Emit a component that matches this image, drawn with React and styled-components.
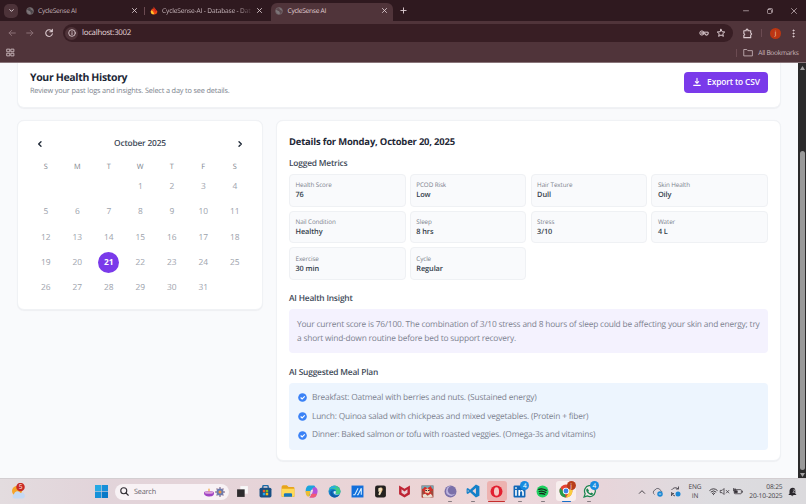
import React from "react";
import styled, { createGlobalStyle } from "styled-components";

const Global = createGlobalStyle`
  * { box-sizing: border-box; }
  body { margin: 0; overflow: hidden; font-family: "Open Sans", "Noto Sans", sans-serif; text-rendering: geometricPrecision; }
  svg { display: block; flex: none; }
`;

const Screen = styled.div`
  width: 806px; height: 504px; overflow: hidden;
  display: flex; flex-direction: column; background: #f9fafc;
`;

/* text */
const Text = styled.span`
  display: block; white-space: nowrap; flex: none; margin: 0;
  font-size: ${(p) => p.$size}px;
  font-weight: ${(p) => p.$weight || 400};
  color: ${(p) => p.$color};
  letter-spacing: ${(p) => p.$track || 0}px;
  line-height: ${(p) => p.$line || 10}px;
`;
const Heading = styled(Text)`
  font-size: 8.4px; font-weight: 600; letter-spacing: -0.2px; line-height: 12px; color: #414a58;
`;
const DetailsTitle = styled(Text)`margin-bottom: 10.2px;`;
const IconTone = styled.div`color: ${(p) => p.$color};`;

/* browser chrome */
const TabStrip = styled.div`
  height: 21px; flex: none; background: #2f191f; color: #dccbd0;
  display: flex; align-items: center;
`;
const TabSearch = styled.div`
  width: 14px; height: 14px; margin-left: 4px; border-radius: 5px; background: #4d3339;
  display: flex; align-items: center; justify-content: center;
`;
const Tab = styled.div`
  width: ${(p) => p.$w}px; height: 18px; flex: none; align-self: flex-end; margin-left: ${(p) => p.$ml}px;
  padding: 0 5.5px 3px 4px; border-radius: 6px 6px 0 0;
  display: flex; align-items: center; gap: 4.5px;
  background: ${(p) => (p.$active ? "#50343a" : "transparent")};
`;
const TabTitle = styled(Text)`
  flex: 1; height: 10px;
  ${(p) => p.$fade && "mask-image: linear-gradient(90deg, #000 76px, rgba(0,0,0,.25) 87px);"}
`;
const Divider = styled.div`
  width: 1px; height: 8px; background: #6b4b52; margin-left: ${(p) => p.$ml || 0}px;
`;
const NewTab = styled.div`margin-left: 7px;`;
const WindowButtons = styled.div`
  margin-left: auto; padding-right: 9px; display: flex; align-items: center; gap: 18px;
`;
const Toolbar = styled.div`
  height: 24px; flex: none; background: #50343a; display: flex; align-items: center;
  padding: 0 8px 0 6.5px; color: #dccbd0;
`;
const NavButtons = styled.div`display: flex; gap: 8.8px; width: 56.5px;`;
const Omnibox = styled.div`
  width: 670px; height: 18px; border-radius: 9px; background: #381e24;
  display: flex; align-items: center; padding: 0 7px 0 2px; gap: 4px;
`;
const InfoChip = styled.div`
  width: 13px; height: 13px; border-radius: 50%; background: #50343a;
  display: flex; align-items: center; justify-content: center;
`;
const OmniActions = styled.div`margin-left: auto; display: flex; gap: 7px; align-items: center;`;
const ToolbarEnd = styled.div`
  margin-left: 9px; display: flex; align-items: center; flex: 1; justify-content: space-between;
`;
const Avatar = styled.div`
  width: 11px; height: 11px; border-radius: 50%; background: #bc3612; color: #fbd9cd;
  font-size: 6px; display: flex; align-items: center; justify-content: center;
`;
const Bookmarks = styled.div`
  height: 18.4px; flex: none; background: #50343a; display: flex; align-items: center;
  padding: 0 7.5px 2px 6px; color: #c9b6bb; border-bottom: 1px solid #89757a;
`;
const BookmarksEnd = styled.div`margin-left: auto; display: flex; align-items: center; gap: 4px;`;

/* page */
const Body = styled.div`flex: 1; min-height: 0; display: flex;`;
const Page = styled.div`
  width: 798px; flex: none; background: #f9fafc; padding: 0 17px; overflow: hidden;
`;
const Card = styled.section`
  background: #fff; border: 1px solid #f0f2f5; border-radius: 7px;
  box-shadow: 0 0.5px 1px rgba(30, 41, 59, 0.05);
`;
const HeaderCard = styled(Card)`
  height: 45px; border-top: 0; border-radius: 0 0 7px 7px; padding: 0 12px;
  display: flex; justify-content: space-between;
`;
const HeaderCopy = styled.div`padding-top: 8.8px;`;
const ExportButton = styled.button`
  width: 84px; height: 21px; margin-top: 8.6px; border: 0; border-radius: 4px; background: #7a3aea;
  display: flex; align-items: center; justify-content: center; gap: 5px; padding: 0; font-family: inherit;
`;
const Columns = styled.div`display: flex; gap: 13px; align-items: flex-start; margin-top: 11.9px;`;
const Calendar = styled(Card)`width: 246px; height: 190px; padding: 0 12px;`;
const MonthBar = styled.div`
  height: 21px; margin-top: 12.6px; padding: 0 5.5px; display: flex; align-items: center; justify-content: space-between;
`;
const Days = styled.div`
  display: grid; grid-template-columns: repeat(7, 31.5px);
  grid-template-rows: 13px repeat(5, 25.12px);
  place-items: center; margin-top: 6.4px;
`;
const Day = styled(Text)`
  width: 21px; height: 21px; line-height: 21px; text-align: center; border-radius: 50%;
  grid-column-start: ${(p) => p.$col || "auto"};
  background: ${(p) => (p.$selected ? "#7a3aea" : "transparent")};
`;

const Details = styled(Card)`width: 505px; height: 341px; padding: 14.6px 12px 0;`;
const Metrics = styled.div`
  display: grid; grid-template-columns: repeat(4, 1fr); grid-auto-rows: 32.8px;
  gap: 3.8px 4.2px; margin: 4px 0 13.3px;
`;
const Metric = styled.div`
  background: #f9fafc; border: 1px solid #eff1f4; border-radius: 4px; padding: 5.3px 5.5px 0;
`;
const Insight = styled.div`
  height: 44px; border-radius: 4px; background: #f4f2fe; padding: 8.7px 8px 0; margin: 4px 0 13.6px;
`;
const Meals = styled.div`
  height: 67px; border-radius: 4px; background: #edf5fe; padding: 5.4px 9px; margin-top: 4px;
`;
const Meal = styled.div`height: 18.8px; display: flex; align-items: center; gap: 5px;`;

const Scrollbar = styled.div`
  width: 8px; background: #2b2a2b; display: flex; flex-direction: column; align-items: center; padding: 3px 0 1.5px;
`;
const Thumb = styled.div`width: 5px; height: 319px; margin-top: auto; margin-bottom: 3px; border-radius: 3px; background: #999;`;

/* taskbar */
const Taskbar = styled.div`
  height: 25.6px; flex: none; border-top: 1px solid #d3ced1; display: flex; align-items: center;
  background: linear-gradient(90deg, #e3dcdf 0, #e2d4da 12%, #e7d4d8 35%, #ecd4d5 53%, #edd8dc 65%, #e7d5da 75%, #dddce0 88%, #dbdadd 100%);
`;
const Weather = styled.div`margin-left: 10px; width: 85px;`;
const Search = styled.div`
  width: 114px; height: 16px; margin-left: 7px; border-radius: 8px; background: #f8f2f5;
  display: flex; align-items: center; padding: 0 3px 0 5px; gap: 5px;
`;
const SearchArt = styled.div`margin-left: auto;`;
const Apps = styled.div`
  display: grid; grid-template-columns: repeat(16, 23.15px); margin-left: 1.5px; height: 100%;
`;
const AppSlot = styled.div`
  height: 24px; display: flex; flex-direction: column; align-items: center; justify-content: center; position: relative;
`;
const Plate = styled.div`
  width: 20px; height: 20px; border-radius: 3px; display: flex; align-items: center; justify-content: center;
  background: ${(p) => p.$bg || "transparent"};
`;
const Running = styled.i`
  position: absolute; bottom: 1px; height: 1.6px; border-radius: 1px;
  width: ${(p) => p.$w}px; background: ${(p) => p.$c};
`;
const Badge = styled.i`
  position: absolute; right: 2px; top: 2px; width: 9px; height: 9px; border-radius: 50%;
  background: ${(p) => p.$c}; color: #fff; font: normal 6.5px/9px "Open Sans", sans-serif; text-align: center;
`;
const Tray = styled.div`margin-left: auto; padding-right: 9.5px; display: flex; align-items: center; color: #353238;`;
const Stack = styled.div`
  width: ${(p) => p.$w}px; display: flex; flex-direction: column; align-items: ${(p) => p.$align}; margin: 0 4px;
`;

const S = ({ w = 10, h = w, vb = "0 0 24 24", sw = 2, children, fill = "none" }) => (
  <svg width={w} height={h} viewBox={vb} fill={fill} stroke="currentColor" strokeWidth={sw} strokeLinecap="round" strokeLinejoin="round">
    {children}
  </svg>
);
const Raw = ({ w = 13, h = w, vb = "0 0 24 24", children }) => (
  <svg width={w} height={h} viewBox={vb}>{children}</svg>
);
const Cross = ({ w = 8, sw = 3 }) => <S w={w} sw={sw}><path d="M5 5l14 14M19 5L5 19" /></S>;
const Globe = ({ light }) => (
  <Raw w={8}>
    <circle cx="12" cy="12" r="10.5" fill={light ? "#5b494e" : "#4c464a"} stroke="#776b6f" strokeWidth="2" />
    <path d="M3 9c4-1 5 3 8 3s1 4 4 5-2 4-4 5C5 21 2 15 3 9zM12 2c3 3 1 5 4 6s3 3 6 3c-1-5-5-9-10-9z" fill="#7d7679" />
  </Raw>
);
const Flame = () => (
  <Raw w={8} h={9}>
    <path d="M11 0c1 5 6 7 8 11l3 3c1 6-4 10-10 10S1 19 3 13c1-4 3-4 3-8 2 1 3 3 3 4 2-3 2-6 2-9z" fill="#ed4b16" />
    <path d="M3 12c4-1 7 4 10 11C6 25 0 19 3 12z" fill="#ffc52b" /><path d="M11 0c1 5 6 7 8 11l-4 6z" fill="#c91c22" />
  </Raw>
);

const appIcons = [
  { icon: <Raw><path d="M8 2h14v14H8z" fill="#f8f7f8" /><path d="M2 8h14v14H2z" fill="#2d2b2d" /></Raw> },
  { icon: <Raw><path d="M7 6V3q0-2 2-2h6q2 0 2 2v3" fill="none" stroke="#1c6ba6" strokeWidth="2.5" /><rect x="1" y="5" width="22" height="18" rx="3" fill="#174f83" /><path d="M7 9h4.5v4.5H7z" fill="#f05b2d" /><path d="M12.5 9H17v4.5h-4.5z" fill="#83bd23" /><path d="M7 14.5h4.5V19H7z" fill="#21a6e8" /><path d="M12.5 14.5H17V19h-4.5z" fill="#fab916" /></Raw> },
  { icon: <Raw w={14}><path d="M1 5q0-3 3-3h6l3 3h8q2 0 2 2v15H1z" fill="#e7a51b" /><path d="M1 8h22v11q0 3-3 3H4q-3 0-3-3z" fill="#ffda58" /><path d="M5 18q0-2 2-2h10q2 0 2 2v4H5z" fill="#1776bd" /></Raw> },
  { icon: <Raw><path d="M7 1h9c3 0 3 4 4 6h-7L9 20H5c-2 0-2-3-3-6C0 9 3 1 7 1z" fill="#1ba4dc" /><path d="M1 11h9l-2 10c-5 2-7-5-7-10z" fill="#edbd35" /><path d="M16 4h3c5 2 5 8 3 13-2 5-4 6-7 6H8c3-2 4-6 5-10 1-5 1-9 3-9z" fill="#b552db" /><path d="M8 23c2-1 3-4 4-7h10c-1 4-3 7-7 7z" fill="#f15c73" /><path d="M11 9h4l-2 7H9z" fill="#f0dde2" /></Raw> },
  { icon: <Raw><circle cx="12" cy="12" r="11" fill="#1684cc" /><path d="M1.5 11C3-2 21-2 23 11c1 7-8 8-9 4 3-5-1-8-5-8s-6 1-7.5 4z" fill="#40cd82" /><path d="M1.5 11C4-1 15 0 17 7 12 4 4 6 1.5 11z" fill="#26aee2" /><path d="M8 13c0 6 6 8 13 5-4 7-16 7-17-3 0-5 8-7 10-3-3-2-6-1-6 1z" fill="#105aa7" /><path d="M13.5 11c3 2-1 4 1 5.5s6 1 8-1c-3 4-11 3-12-1-1-2 1-4 3-3.5z" fill="#e7eef0" /></Raw> },
  { icon: <Raw><path d="M1 1h22v22H1z" fill="#126fdb" /><path d="M4 18h3l6-12M11 18h2l6-12v12" stroke="#d8efff" strokeWidth="2" fill="none" /></Raw> },
  { icon: <Raw><rect x="2" y="1" width="20" height="22" rx="4" fill="#24211f" /><path d="M8 6c6-3 9-1 7 5l-4 8-3-1 2-7-2 2z" fill="#efdfbe" /><path d="M14 5l2 3-3 5" stroke="#d38d3e" fill="none" /></Raw> },
  { icon: <Raw><path d="M2 1l10 6 10-6v16l-10 6-10-6z" fill="#be2434" /><path d="M6.5 8l5.5 4 5.5-4v6.5L12 18l-5.5-3.5z" fill="#e8cdd2" /></Raw> },
  { icon: <Raw><path d="M1 1h22v22H1z" fill="#9b4b3e" /><path d="M1 1h22v6H1z" fill="#72a7b6" /><path d="M2 9l5-6 5 3 6-4 4 8-5 1 5 11h-7l-3-7-7 8H2l5-9z" fill="#d62f29" /><path d="M7 9l5-3 5 4-3 5-6-1z" fill="#f1ccad" /><path d="M3 18l5-2 4 4 6-4 4 5-6 2H4z" fill="#e9e1d4" /><path d="M8 10h3m2 0h3" stroke="#312129" strokeWidth="2" /></Raw> },
  { icon: <Raw><circle cx="12" cy="12" r="11" fill="#7b70a9" /><path d="M13 2a9 9 0 1 0 8 13A8 8 0 1 1 13 2z" fill="#beb5df" /><circle cx="14" cy="10" r="4" fill="#7a70aa" /></Raw>, run: true },
  { icon: <Raw w={14}><path d="M17 1l6 3v16l-6 3L7 14l-4 3-2-1V8l2-1 4 3z" fill="#1380c9" /><path d="M17 7l-6 5 6 5zM3 10v4l2-2z" fill="#e9d3d7" /></Raw>, run: true },
  { icon: <Raw><circle cx="12" cy="12" r="11" fill="#e22030" /><ellipse cx="12" cy="12" rx="4.7" ry="8" fill="#f5c9c4" /></Raw>, plate: "#edb2b0", run: true, wide: 17, rc: "#c62e2d" },
  { icon: <Raw><rect x="1" y="1" width="22" height="22" rx="2" fill="#1167b7" /><path d="M4 9h3v11H4zM4 4h3v3H4zM10 9h3v2c2-3 7-3 7 3v6h-3v-6c0-3-4-3-4 0v6h-3z" fill="#fff" /></Raw>, run: true, badge: "4", bc: "#168be0" },
  { icon: <Raw><circle cx="12" cy="12" r="11" fill="#1fd060" /><path d="M5 8q7-2 14 2M6 12q6-2 12 2M7 16q5-1 9 1" fill="none" stroke="#17251b" strokeWidth="2.4" strokeLinecap="round" /></Raw>, run: true },
  { icon: <Raw w={14}><circle cx="12" cy="12" r="11" fill="#e34334" /><path d="M2 7l7 7 3 9A11 11 0 0 1 2 7z" fill="#269b4c" /><path d="M12 7h10a11 11 0 0 1-10 16l5-9z" fill="#f9cc3d" /><circle cx="12" cy="12" r="5.5" fill="#fff" /><circle cx="12" cy="12" r="4.2" fill="#3e83e8" /></Raw>, plate: "#f8eeee", run: true, wide: 9, rc: "#176ec7", badge: "j", bc: "#b83c1c" },
  { icon: <Raw><path d="M2 22l2-6a10 10 0 1 1 4 4z" fill="#f0e5e6" stroke="#1c8650" strokeWidth="2.3" /><path d="M8 6l3 4-1 2q1 3 4 3l2-1 3 2q-2 4-6 2-5-2-7-7-1-3 2-5z" fill="#1c8650" /></Raw>, run: true, badge: "4", bc: "#168be0" },
];

const metrics = [
  ["Health Score", "76"], ["PCOD Risk", "Low"], ["Hair Texture", "Dull"], ["Skin Health", "Oily"],
  ["Nail Condition", "Healthy"], ["Sleep", "8 hrs"], ["Stress", "3/10"], ["Water", "4 L"],
  ["Exercise", "30 min"], ["Cycle", "Regular"],
];
const meals = [
  "Breakfast: Oatmeal with berries and nuts. (Sustained energy)",
  "Lunch: Quinoa salad with chickpeas and mixed vegetables. (Protein + fiber)",
  "Dinner: Baked salmon or tofu with roasted veggies. (Omega-3s and vitamins)",
];

export default function App() {
  return (
    <Screen>
      <Global />
      <TabStrip>
        <TabSearch><S w={7} sw={3.4}><path d="M6 9l6 6 6-6" /></S></TabSearch>
        <Tab $w={121.5} $ml={3.5}><Globe /><TabTitle $size={6.6} $track={-0.26} $color="#c9b8bd">CycleSense AI</TabTitle><Cross w={7} /></Tab>
        <Divider $ml={1} />
        <Tab $w={122.5} $ml={0.5}><Flame /><TabTitle $fade $size={6.6} $track={-0.16} $color="#c9b8bd">CycleSense-AI - Database - Dat</TabTitle><Cross w={7} /></Tab>
        <Tab $w={122} $ml={3} $active><Globe light /><TabTitle $size={6.6} $track={-0.26} $color="#e5d7db">CycleSense AI</TabTitle><Cross w={7} /></Tab>
        <NewTab><S w={7} sw={3.2}><path d="M12 3v18M3 12h18" /></S></NewTab>
        <WindowButtons>
          <S w={6} sw={2.5}><path d="M2 11h20" /></S>
          <S w={6} sw={2.5}><rect x="2" y="6" width="16" height="16" rx="3" /><path d="M7 2h11q4 0 4 4v11" /></S>
          <S w={6} sw={2.7}><path d="M2 2l20 20M22 2L2 22" /></S>
        </WindowButtons>
      </TabStrip>
      <Toolbar>
        <NavButtons>
          <IconTone $color="#8b7076"><S sw={2.4}><path d="M20 12H5M11 6l-6 6 6 6" /></S></IconTone>
          <IconTone $color="#8b7076"><S sw={2.4}><path d="M4 12h15M13 6l6 6-6 6" /></S></IconTone>
          <S sw={2.6}><path d="M19 8a8 8 0 1 0 1 6M20 3v6h-6" /></S>
        </NavButtons>
        <Omnibox>
          <InfoChip><S w={8} sw={2.6}><circle cx="12" cy="12" r="10" /><path d="M12 11v6M12 7v.3" /></S></InfoChip>
          <Text $size={7.9} $track={-0.3} $color="#e5d7da">localhost:3002</Text>
          <OmniActions>
            <S w={10} sw={2.4}><circle cx="7" cy="12" r="5" /><circle cx="7" cy="12" r="1" /><path d="M12 10h10v5h-2v2h-4v-3h-4" /></S>
            <S w={10} sw={2.4}><path d="M12 3l2.7 6 6.3.6-4.8 4.2L17.7 20 12 16.7 6.3 20l1.500-6.200L3 9.600 9.300 9z" /></S>
          </OmniActions>
        </Omnibox>
        <ToolbarEnd>
          <S w={11} sw={2.4}><path d="M4 6h5V4q2-3 4 0v2h6v5q4 2 0 4v6H4v-5q4-2 0-4z" /></S>
          <Divider />
          <Avatar>j</Avatar>
          <S w={9} fill="currentColor" sw={1.4}><circle cx="12" cy="4" r="1.8" /><circle cx="12" cy="12" r="1.8" /><circle cx="12" cy="20" r="1.8" /></S>
        </ToolbarEnd>
      </Toolbar>
      <Bookmarks>
        <S w={9} sw={2.5}><path d="M3 3h7v7H3zM14 3h7v7h-7zM3 14h7v7H3zM14 14h7v7h-7z" /></S>
        <BookmarksEnd>
          <Divider />
          <S w={13} h={9} vb="-6 0 34 24" sw={2.2}><path d="M1 20V4h8l3 3h12v13z" /></S>
          <Text $size={6.6} $track={-0.29} $color="#cbbabf">All Bookmarks</Text>
        </BookmarksEnd>
      </Bookmarks>

      <Body>
        <Page>
          <HeaderCard>
            <HeaderCopy>
              <Text as="h1" $size={10.5} $weight={700} $track={-0.34} $line={12.4} $color="#1d2736">Your Health History</Text>
              <Text $size={7.35} $track={-0.165} $line={12} $color="#7d838e">Review your past logs and insights. Select a day to see details.</Text>
            </HeaderCopy>
            <ExportButton>
              <IconTone $color="#fff"><S w={10} sw={2.6}><path d="M12 3v11M8 11l4 4 4-4M4 20h16" /></S></IconTone>
              <Text $size={8.4} $weight={600} $track={-0.13} $color="#fff">Export to CSV</Text>
            </ExportButton>
          </HeaderCard>
          <Columns>
            <Calendar>
              <MonthBar>
                <IconTone $color="#1f2937"><S w={8} sw={4}><path d="M15 5l-7 7 7 7" /></S></IconTone>
                <Heading as="h2">October 2025</Heading>
                <IconTone $color="#1f2937"><S w={8} sw={4}><path d="M9 5l7 7-7 7" /></S></IconTone>
              </MonthBar>
              <Days>
                {"SMTWTFS".split("").map((d, i) => <Day key={i} $size={7.35} $color="#7d838e">{d}</Day>)}
                {Array.from({ length: 31 }, (_, i) => i + 1).map((n) => (
                  <Day key={n} $col={n === 1 ? 4 : undefined} $size={8.4} $track={-0.1} $weight={n === 21 ? 700 : 400} $selected={n === 21} $color={n === 21 ? "#fff" : "#9ca2ac"}>{n}</Day>
                ))}
              </Days>
            </Calendar>
            <Details>
              <DetailsTitle as="h2" $size={9.45} $weight={700} $track={-0.19} $line={12} $color="#1f2937">Details for Monday, October 20, 2025</DetailsTitle>
              <Heading as="h3">Logged Metrics</Heading>
              <Metrics>
                {metrics.map(([k, v]) => (
                  <Metric key={k}>
                    <Text $size={6.3} $track={-0.1} $line={10} $color="#7d838e">{k}</Text>
                    <Text $size={7.35} $weight={600} $track={-0.08} $line={10} $color="#333d4b">{v}</Text>
                  </Metric>
                ))}
              </Metrics>
              <Heading as="h3">AI Health Insight</Heading>
              <Insight>
                <Text $size={8.4} $track={-0.195} $line={13.6} $color="#7e8391">
                  Your current score is 76/100. The combination of 3/10 stress and 8 hours of sleep could be affecting your skin and energy; try<br />
                  a short wind-down routine before bed to support recovery.
                </Text>
              </Insight>
              <Heading as="h3">AI Suggested Meal Plan</Heading>
              <Meals>
                {meals.map((m) => (
                  <Meal key={m}>
                    <Raw w={9}><circle cx="12" cy="12" r="11.5" fill="#3b82f6" /><path d="M7 12l4 4 7-7" fill="none" stroke="#fff" strokeWidth="3" /></Raw>
                    <Text $size={8.4} $track={-0.2} $color="#7d8390">{m}</Text>
                  </Meal>
                ))}
              </Meals>
            </Details>
          </Columns>
        </Page>
        <Scrollbar>
          <Raw w={5} h={4} vb="0 0 10 8"><path d="M5 0l5 8H0z" fill="#a3a1a2" /></Raw>
          <Thumb />
          <Raw w={5} h={4} vb="0 0 10 8"><path d="M5 8L0 0h10z" fill="#a3a1a2" /></Raw>
        </Scrollbar>
      </Body>

      <Taskbar>
        <Weather>
          <Raw w={16} h={17} vb="0 0 32 34">
            <circle cx="14" cy="16" r="10" fill="#f5a52a" />
            <path d="M8 31a5 5 0 0 1 0-9 7 7 0 0 1 13-2 6 6 0 0 1 5 11z" fill="#c4d9f4" />
            <circle cx="21" cy="8" r="8.5" fill="#c92a25" />
            <text x="21" y="12.5" textAnchor="middle" fontSize="13" fill="#fff" fontFamily="Open Sans, sans-serif">5</text>
          </Raw>
        </Weather>
        <Raw w={13}><path d="M0 0h11.5v11.5H0z" fill="#26a9e4" /><path d="M12.5 0H24v11.5H12.5z" fill="#178fd9" /><path d="M0 12.5h11.5V24H0z" fill="#1591d9" /><path d="M12.5 12.5H24V24H12.5z" fill="#0879c8" /></Raw>
        <Search>
          <IconTone $color="#302d33"><S w={9} sw={3}><circle cx="10" cy="10" r="8" /><path d="M16 16l6 6" /></S></IconTone>
          <Text $size={7.3} $track={-0.2} $color="#67616a">Search</Text>
          <SearchArt>
            <Raw w={23} h={12} vb="0 0 46 24">
              <path d="M2 12q10-4 20 0c1 8-5 9-10 9S1 19 2 12z" fill="#a044c4" /><ellipse cx="12" cy="13" rx="9" ry="2.5" fill="#dba0d8" /><path d="M12 4q3 4 0 8-3-4 0-8z" fill="#f3a12e" />
              <g stroke="#a0879f" strokeWidth="3"><path d="M34 2v20M24 12h20M27 5l14 14M41 5L27 19" /></g>
              <circle cx="34" cy="12" r="7" fill="#697bb0" /><circle cx="34" cy="12" r="3" fill="#ef9a43" />
            </Raw>
          </SearchArt>
        </Search>
        <Apps>
          {appIcons.map((a, i) => (
            <AppSlot key={i}>
              <Plate $bg={a.plate}>{a.icon}</Plate>
              {a.run && <Running $w={a.wide || 4} $c={a.rc || "#837b80"} />}
              {a.badge && <Badge $c={a.bc}>{a.badge}</Badge>}
            </AppSlot>
          ))}
        </Apps>
        <Tray>
          <S w={8} sw={2.7}><path d="M4 16l8-8 8 8" /></S>
          <Raw w={20} h={10} vb="-14 0 40 20"><path d="M3 15a5 5 0 0 1 1-9 6 6 0 0 1 11 1 5 5 0 0 1 3 3" fill="none" stroke="#706e76" strokeWidth="2" /><circle cx="14" cy="14" r="5.5" fill="#1b87d3" /><path d="M11.5 14h5" stroke="#fff" strokeWidth="1.5" /></Raw>
          <Raw w={16} h={11} vb="-8 0 32 22"><path d="M3 8q6-8 14-2M17 1v5h-5M3 12q1 7 7 8M3 20v-5h5" fill="none" stroke="#555159" strokeWidth="2" /><circle cx="16" cy="16" r="5" fill="#1b87d3" /></Raw>
          <Stack $w={19} $align="center">
            <Text $size={6.5} $track={-0.1} $line={8.4} $color="#454148">ENG</Text>
            <Text $size={6.5} $track={-0.1} $line={8.4} $color="#454148">IN</Text>
          </Stack>
          <S w={9} sw={2.5}><path d="M2 9q10-9 20 0M5.5 13q6.5-6 13 0M9 17q3-3 6 0M12 20v.5" /></S>
          <S w={12} h={9} vb="-6 0 32 24"><path d="M1 9h4l5-5v16l-5-5H1zM16 9l7 7M23 9l-7 7" /></S>
          <S w={13} h={9} vb="-8 0 34 24"><rect x="3" y="7" width="19" height="11" rx="2" /><path d="M25 11v3M5 10h6v5H5z" fill="currentColor" /><path d="M1 4v6M5 4v6" /></S>
          <Stack $w={36} $align="flex-end">
            <Text $size={6.6} $track={-0.12} $line={8.7} $color="#454148">08:25</Text>
            <Text $size={6.6} $track={-0.12} $line={8.7} $color="#454148">20-10-2025</Text>
          </Stack>
          <Raw w={10}><path d="M3 19l3-3V9q1-7 8-7 6 0 6 7v7l3 3zM9 20h7q-3 4-7 0z" fill="#29262b" /><path d="M14 7h5l-5 6h5" fill="none" stroke="#dbdadd" strokeWidth="1.3" /></Raw>
        </Tray>
      </Taskbar>
    </Screen>
  );
}
